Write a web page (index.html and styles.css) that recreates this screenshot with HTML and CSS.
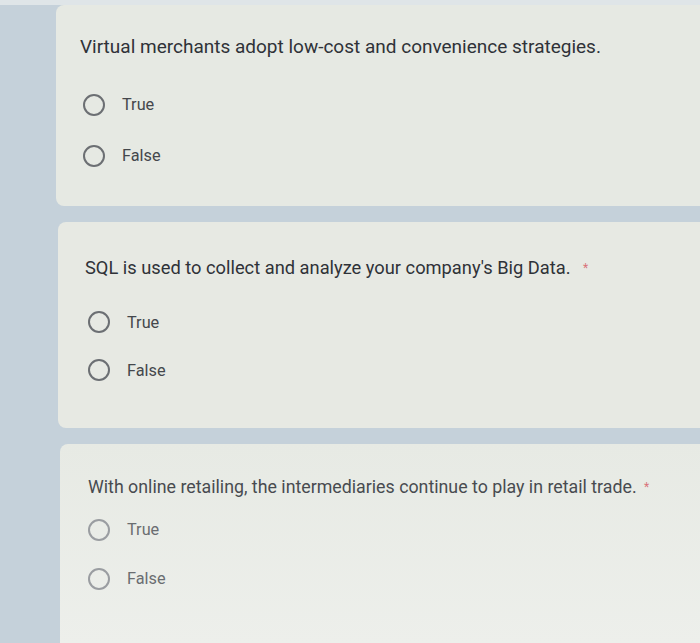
FILE: index.html
```html
<!DOCTYPE html>
<html lang="en">
<head>
<meta charset="utf-8">
<title>Quiz</title>
<link rel="stylesheet" href="styles.css">
</head>
<body>
<main class="page">
  <section class="card card-1">
    <div class="question">Virtual merchants adopt low-cost and convenience strategies.</div>
    <div class="options">
      <label class="option"><span class="radio"></span><span class="label">True</span></label>
      <label class="option"><span class="radio"></span><span class="label">False</span></label>
    </div>
  </section>
  <section class="card card-2">
    <div class="question">SQL is used to collect and analyze your company's Big Data. <span class="req">*</span></div>
    <div class="options">
      <label class="option"><span class="radio"></span><span class="label">True</span></label>
      <label class="option"><span class="radio"></span><span class="label">False</span></label>
    </div>
  </section>
  <section class="card card-3">
    <div class="question">With online retailing, the intermediaries continue to play in retail trade. <span class="req">*</span></div>
    <div class="options">
      <label class="option"><span class="radio"></span><span class="label">True</span></label>
      <label class="option"><span class="radio"></span><span class="label">False</span></label>
    </div>
  </section>
</main>
</body>
</html>
```

FILE: styles.css
```css
html, body {
  margin: 0;
  padding: 0;
}
body {
  background: #c5d1da;
  font-family: Roboto, "Noto Sans", "Liberation Sans", sans-serif;
  color: #3a3d43;
  height: 643px;
  overflow: hidden;
}
.page {
  display: flex;
  flex-direction: column;
  gap: 16px;
  padding-top: 5px;
  padding-left: 56px;
  background: linear-gradient(#dfe5e8 0 5px, transparent 5px);
}
.card {
  background: #e6e9e3;
  border-radius: 8px 0 0 8px;
  padding-left: 24px;
  box-sizing: border-box;
}
.card-1 {
  height: 201px;
  padding-top: 30px;
}
.card-2 {
  height: 206px;
  padding-top: 34px;
  margin-left: 2px;
  padding-left: 27px;
  background: #e7e9e3;
}
.card-3 {
  height: 200px;
  padding-top: 31px;
  margin-left: 4px;
  padding-left: 28px;
  border-radius: 8px 0 0 0;
  background: linear-gradient(#e7eae4, #edefeb);
}
.question {
  line-height: 24px;
  font-size: 19px;
  color: #2f3238;
  white-space: nowrap;
}
.card-2 .question { font-size: 18.3px; }
.card-3 .question { font-size: 17.8px; color: #484b50; }
.req {
  color: #d9737a;
  font-size: 12px;
  vertical-align: top;
  margin-left: 8px;
}
.card-3 .req { margin-left: 3px; }
.options {
  display: flex;
  flex-direction: column;
  margin-top: 20px;
}
.card-2 .options { margin-top: 18px; }
.card-3 .options { margin-top: 6px; }
.option {
  display: flex;
  align-items: center;
  height: 51px;
  padding-left: 3px;
}
.card-2 .option { height: 48px; }
.card-3 .option { height: 49px; padding-left: 0; }
.radio {
  width: 22px;
  height: 22px;
  box-sizing: border-box;
  border: 2px solid #6c6f73;
  border-radius: 50%;
  flex: none;
}
.card-3 .radio { border-color: #9a9da1; }
.label {
  margin-left: 17px;
  font-size: 16.3px;
  color: #44474c;
}
.card-3 .label { color: #6a6d71; }
```
